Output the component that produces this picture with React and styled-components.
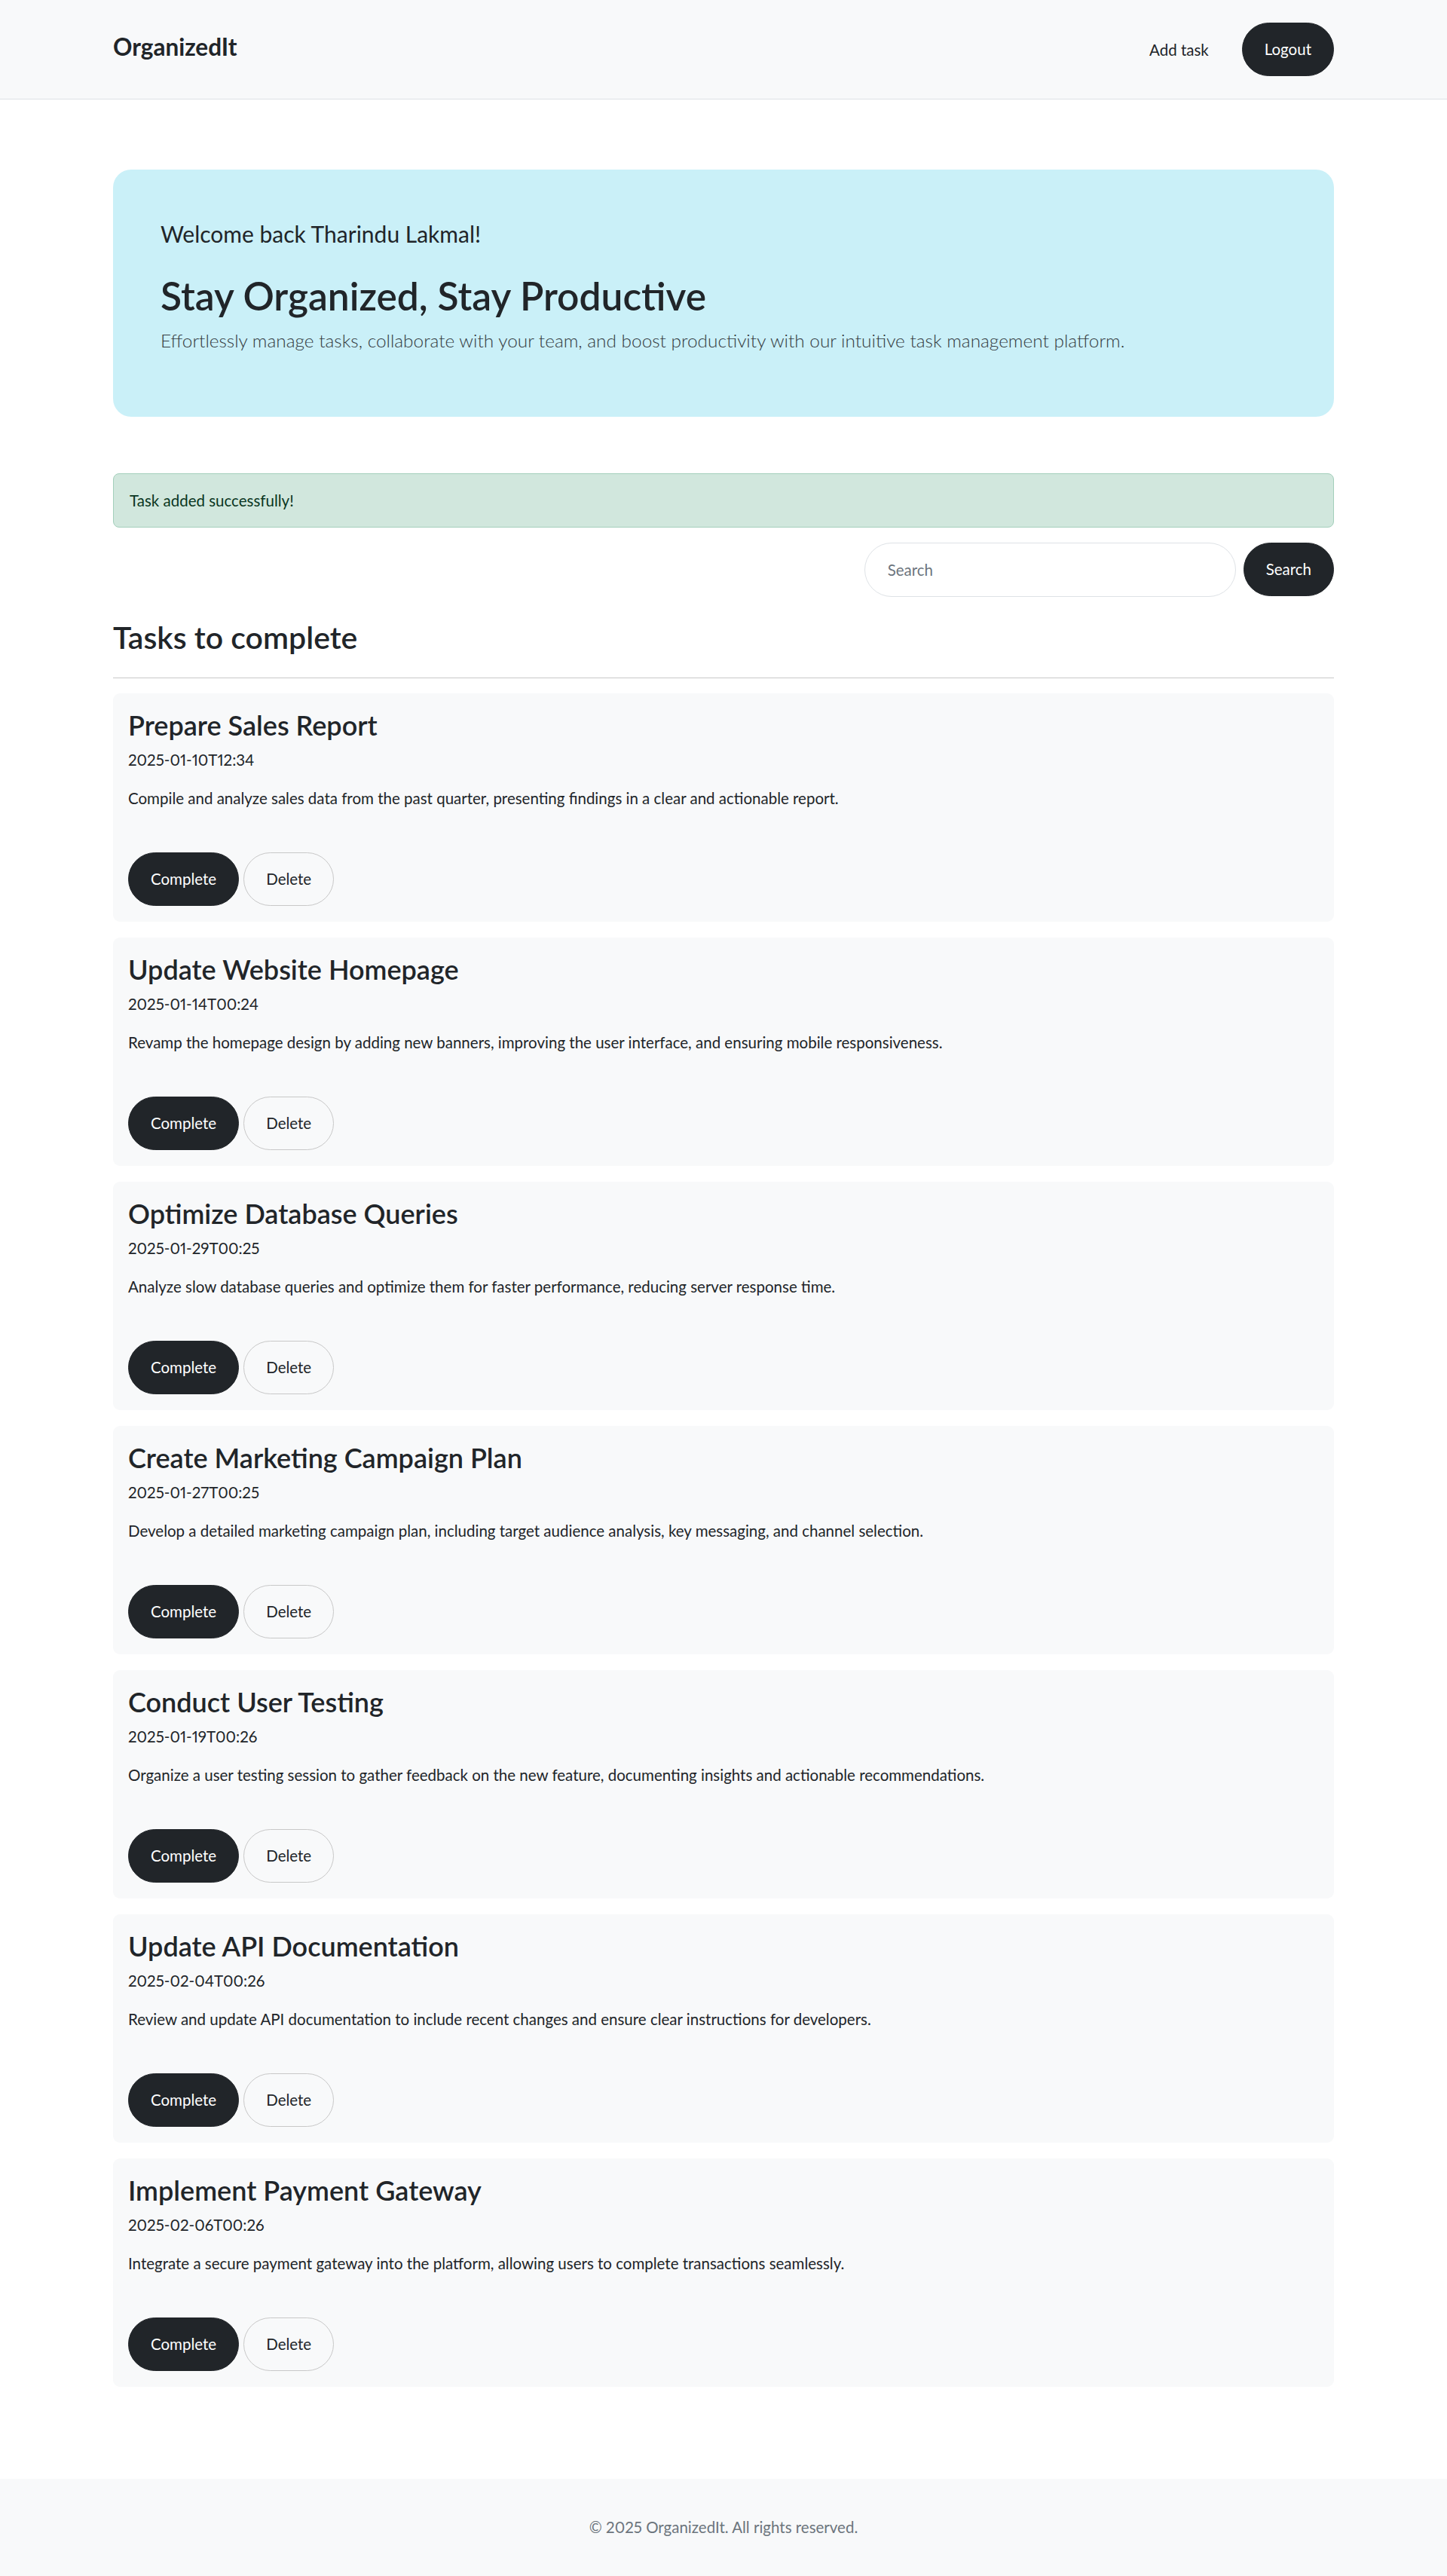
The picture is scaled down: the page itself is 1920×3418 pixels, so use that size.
import styled, { createGlobalStyle } from 'styled-components';

const GlobalStyle = createGlobalStyle`
    * {
        box-sizing: border-box;
    }
    body {
        margin: 0;
        background: #fff;
        color: #212529;
        font-family: Lato, "Open Sans", "Noto Sans", sans-serif;
        font-variant-numeric: proportional-nums;
    }
`;

const tasks = [
    {
        title: 'Prepare Sales Report',
        date: '2025-01-10T12:34',
        text: 'Compile and analyze sales data from the past quarter, presenting findings in a clear and actionable report.',
    },
    {
        title: 'Update Website Homepage',
        date: '2025-01-14T00:24',
        text: 'Revamp the homepage design by adding new banners, improving the user interface, and ensuring mobile responsiveness.',
    },
    {
        title: 'Optimize Database Queries',
        date: '2025-01-29T00:25',
        text: 'Analyze slow database queries and optimize them for faster performance, reducing server response time.',
    },
    {
        title: 'Create Marketing Campaign Plan',
        date: '2025-01-27T00:25',
        text: 'Develop a detailed marketing campaign plan, including target audience analysis, key messaging, and channel selection.',
    },
    {
        title: 'Conduct User Testing',
        date: '2025-01-19T00:26',
        text: 'Organize a user testing session to gather feedback on the new feature, documenting insights and actionable recommendations.',
    },
    {
        title: 'Update API Documentation',
        date: '2025-02-04T00:26',
        text: 'Review and update API documentation to include recent changes and ensure clear instructions for developers.',
    },
    {
        title: 'Implement Payment Gateway',
        date: '2025-02-06T00:26',
        text: 'Integrate a secure payment gateway into the platform, allowing users to complete transactions seamlessly.',
    },
];

const App = () => {
    return (
        <Page>
            <GlobalStyle />
            <NavBar>
                <NavInner>
                    <Brand>OrganizedIt</Brand>
                    <NavActions>
                        <NavLink>Add task</NavLink>
                        <PillButton>Logout</PillButton>
                    </NavActions>
                </NavInner>
            </NavBar>

            <Main>
                <Hero>
                    <Lead>Welcome back Tharindu Lakmal!</Lead>
                    <HeroTitle>Stay Organized, Stay Productive</HeroTitle>
                    <HeroText>
                        Effortlessly manage tasks, collaborate with your team, and boost productivity with our intuitive task management platform.
                    </HeroText>
                </Hero>

                <Alert>Task added successfully!</Alert>

                <SearchRow>
                    <SearchInput placeholder="Search" />
                    <PillButton>Search</PillButton>
                </SearchRow>

                <SectionTitle>Tasks to complete</SectionTitle>
                <Divider />

                <TaskList>
                    {tasks.map((task) => (
                        <TaskCard key={task.title}>
                            <TaskTitle>{task.title}</TaskTitle>
                            <TaskDate>{task.date}</TaskDate>
                            <TaskText>{task.text}</TaskText>
                            <Actions>
                                <PillButton>Complete</PillButton>
                                <PillButton $outline>Delete</PillButton>
                            </Actions>
                        </TaskCard>
                    ))}
                </TaskList>
            </Main>

            <Footer>© 2025 OrganizedIt. All rights reserved.</Footer>
        </Page>
    );
};

// styled components
const Page = styled.div`
    min-height: 100vh;
    display: flex;
    flex-direction: column;
`;

const NavBar = styled.header`
    height: 132px;
    background-color: #f8f9fa;
    border-bottom: 1px solid #dee2e6;
`;

const NavInner = styled.div`
    width: 1620px;
    height: 100%;
    margin: 0 auto;
    display: flex;
    align-items: center;
    justify-content: space-between;
`;

const Brand = styled.a`
    margin-top: -6px;
    font-size: 31.5px;
    font-weight: 700;
    line-height: 1.2;
    color: #212529;
`;

const NavActions = styled.nav`
    display: flex;
    align-items: center;
    gap: 44px;
`;

const NavLink = styled.a`
    margin-top: 2px;
    font-size: 20.5px;
    line-height: 1.2;
    color: #212529;
`;

const PillButton = styled.button`
    height: 71px;
    padding: 0 29px;
    border: 1px solid ${(p) => (p.$outline ? '#c8c8c8' : '#212529')};
    border-radius: 36px;
    background-color: ${(p) => (p.$outline ? 'transparent' : '#212529')};
    color: ${(p) => (p.$outline ? '#212529' : '#fff')};
    font-family: inherit;
    font-size: 20.5px;
    line-height: 1.2;
    cursor: pointer;
`;

const Main = styled.main`
    width: 1620px;
    margin: 0 auto;
    padding: 93px 0 100px;
    flex: 1;
`;

const Hero = styled.section`
    height: 328px;
    padding: 67px 63px 0;
    border-radius: 24px;
    background-color: #caf0f8;
`;

const Lead = styled.p`
    margin: 0 0 34px;
    font-size: 30px;
    font-weight: 400;
    line-height: 1.2;
`;

const HeroTitle = styled.h1`
    margin: 0 0 13px;
    font-size: 51.5px;
    font-weight: 600;
    line-height: 1.2;
`;

const HeroText = styled.p`
    margin: 0;
    font-size: 24.4px;
    font-weight: 300;
    line-height: 1.2;
    color: #343a40;
`;

const Alert = styled.div`
    height: 72px;
    margin-top: 75px;
    padding: 0 21px;
    display: flex;
    align-items: center;
    border: 1px solid #a3cfbb;
    border-radius: 8px;
    background-color: #d1e7dd;
    color: #0a3622;
    font-size: 20.5px;
    line-height: 1.2;
`;

const SearchRow = styled.form`
    margin-top: 20px;
    display: flex;
    justify-content: flex-end;
    gap: 10px;
`;

const SearchInput = styled.input`
    width: 493px;
    height: 72px;
    padding: 0 30px;
    border: 1px solid #dee2e6;
    border-radius: 36px;
    background: #fff;
    font-family: inherit;
    font-size: 20.5px;
    color: #212529;
    outline: none;

    &::placeholder {
        color: #6c757d;
    }
`;

const SectionTitle = styled.h3`
    margin: 29px 0 0;
    font-size: 41px;
    font-weight: 600;
    line-height: 1.2;
`;

const Divider = styled.hr`
    margin: 29px 0 20px;
    border: 0;
    border-top: 1px solid #c8c8c8;
`;

const TaskList = styled.div`
    display: flex;
    flex-direction: column;
    gap: 21px;
`;

const TaskCard = styled.article`
    height: 303px;
    padding: 21px 20px 20px;
    border-radius: 9px;
    background-color: #f8f9fa;
`;

const TaskTitle = styled.h4`
    margin: 0 0 12px;
    font-size: 36px;
    font-weight: 600;
    line-height: 1.2;
`;

const TaskDate = styled.p`
    margin: 0 0 26px;
    font-size: 20.5px;
    line-height: 1.2;
`;

const TaskText = styled.p`
    margin: 0 0 59px;
    font-size: 20.5px;
    line-height: 1.2;
`;

const Actions = styled.div`
    display: flex;
    gap: 6px;
`;

const Footer = styled.footer`
    height: 129px;
    display: flex;
    align-items: center;
    justify-content: center;
    background-color: #f8f9fa;
    color: #6c757d;
    font-size: 20.5px;
    line-height: 1.2;
`;

export default App;
